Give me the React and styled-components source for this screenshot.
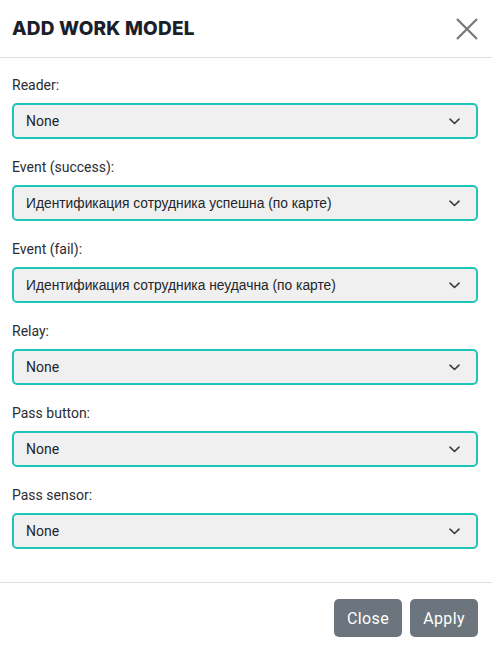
import React from 'react';
import styled, { createGlobalStyle } from 'styled-components';

const GlobalStyle = createGlobalStyle`
  body {
    margin: 0;
    background: #fff;
    font-family: Roboto, "Liberation Sans", sans-serif;
  }
`;

const fields = [
  { label: 'Reader:', value: 'None' },
  { label: 'Event (success):', value: 'Идентификация сотрудника успешна (по карте)', cyr: true },
  { label: 'Event (fail):', value: 'Идентификация сотрудника неудачна (по карте)', cyr: true },
  { label: 'Relay:', value: 'None' },
  { label: 'Pass button:', value: 'None' },
  { label: 'Pass sensor:', value: 'None' },
];

const Chevron = () => (
  <svg width="11" height="7" viewBox="0 0 11 7">
    <path d="M1 1.2 L5.5 5.5 L10 1.2" fill="none" stroke="#3a3d42" strokeWidth="1.6" strokeLinecap="round" strokeLinejoin="round" />
  </svg>
);

const CloseIcon = () => (
  <svg width="22" height="22" viewBox="0 0 22 22">
    <path d="M1 1 L21 21 M21 1 L1 21" stroke="#777" strokeWidth="2.2" />
  </svg>
);

const App = () => {
  return (
    <Modal>
      <GlobalStyle />
      <Header>
        <Title>ADD WORK MODEL</Title>
        <CloseButton><CloseIcon /></CloseButton>
      </Header>
      <Body>
        {fields.map((f, index) => (
          <Group key={index}>
            <Label>{f.label}</Label>
            <Select>
              <SelectValue $cyr={f.cyr}>{f.value}</SelectValue>
              <Chevron />
            </Select>
          </Group>
        ))}
      </Body>
      <Footer>
        <Button>Close</Button>
        <Button>Apply</Button>
      </Footer>
    </Modal>
  );
};

const Modal = styled.div`
  width: 492px;
  height: 650px;
  background: #fff;
  display: flex;
  flex-direction: column;
`;

const Header = styled.div`
  height: 58px;
  box-sizing: border-box;
  border-bottom: 1px solid #dedede;
  display: flex;
  align-items: center;
  justify-content: space-between;
  padding: 0 14px 0 12px;
`;

const Title = styled.h1`
  margin: 0;
  font-family: Inter, sans-serif;
  font-weight: 800;
  font-size: 19px;
  letter-spacing: 0.2px;
  color: #1b1f2a;
`;

const CloseButton = styled.div`
  display: flex;
  margin-top: 1px;
`;

const Body = styled.div`
  padding: 17px 14px 33px 12px;
  display: flex;
  flex-direction: column;
  gap: 18px;
  border-bottom: 1px solid #dedede;
`;

const Group = styled.div`
  display: flex;
  flex-direction: column;
  gap: 7px;
`;

const Label = styled.div`
  font-size: 14px;
  line-height: 21px;
  color: #2a2d33;
`;

const Select = styled.div`
  height: 36px;
  box-sizing: border-box;
  border: 2px solid #1ec6b8;
  border-radius: 5px;
  background: #f0f0f0;
  display: flex;
  align-items: center;
  justify-content: space-between;
  padding: 0 16px 0 12px;
`;

const SelectValue = styled.span`
  font-family: ${(p) => (p.$cyr ? '"Liberation Sans", Arial, sans-serif' : 'Roboto, sans-serif')};
  font-size: ${(p) => (p.$cyr ? '13.8px' : '14px')};
  color: #23262b;
`;

const Footer = styled.div`
  display: flex;
  justify-content: flex-end;
  gap: 8px;
  padding: 16px 14px 0 12px;
`;

const Button = styled.button`
  height: 38px;
  padding: 0 13px;
  border: none;
  border-radius: 5px;
  background: #6c757d;
  color: #fff;
  font-family: Roboto, sans-serif;
  font-size: 16px;
  letter-spacing: 0.4px;
  cursor: pointer;
`;

export default App;
